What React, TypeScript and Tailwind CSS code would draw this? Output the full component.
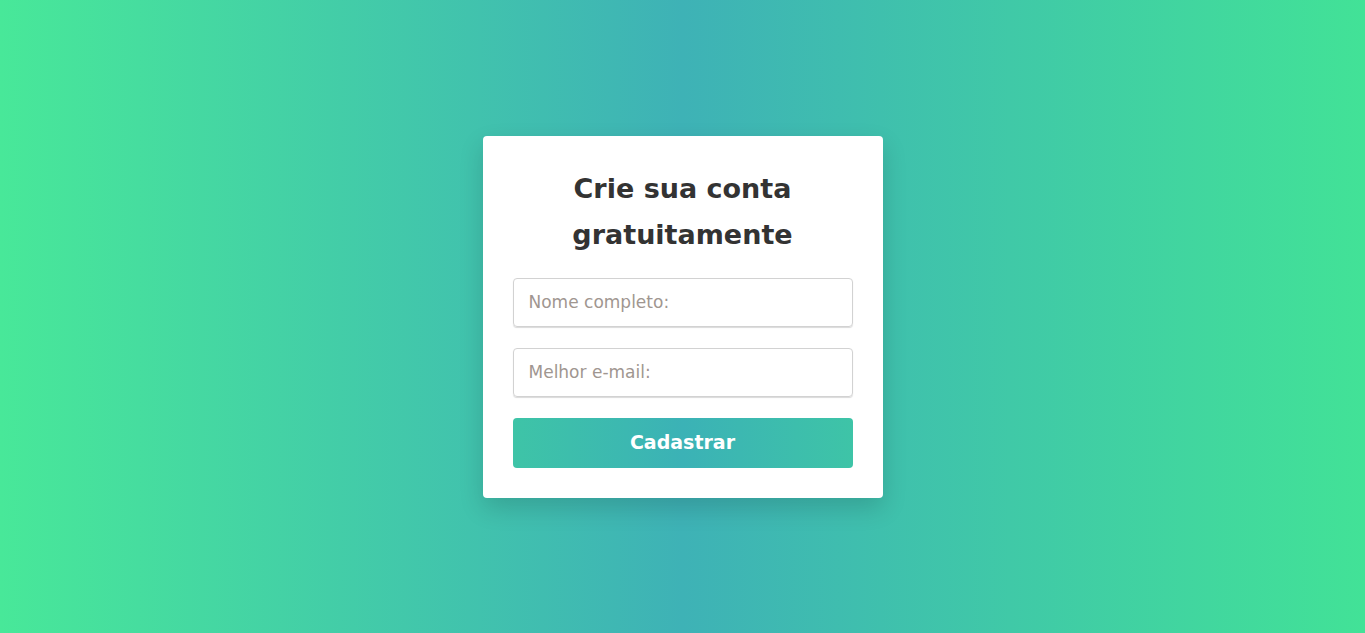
import React from "react";

export default function App() {
  return (
    <div
      className="w-full h-[633px] flex items-center justify-center bg-[linear-gradient(90deg,#48e899_0%,#3eb2b6_50%,#42e297_100%)]"
      style={{ fontFamily: "'DejaVu Sans', 'Noto Sans', sans-serif" }}
    >
      <form
        className="w-[400px] bg-white rounded-[4px] p-[30px] flex flex-col shadow-[0_10px_25px_rgba(0,0,0,0.15)]"
        onSubmit={(e) => e.preventDefault()}
      >
        <h1 className="text-center text-[27px] leading-[46px] font-semibold text-[#333333] px-[20px]">
          Crie sua conta gratuitamente
        </h1>
        <input
          type="text"
          placeholder="Nome completo:"
          className="mt-[20px] h-[49px] w-full rounded-[4px] border border-[#d2d2d2] shadow-[0_1px_1px_rgba(0,0,0,0.15)] px-[15px] text-[17px] text-[#333] placeholder:text-[#a09690] outline-none"
        />
        <input
          type="email"
          placeholder="Melhor e-mail:"
          className="mt-[21px] h-[49px] w-full rounded-[4px] border border-[#d2d2d2] shadow-[0_1px_1px_rgba(0,0,0,0.15)] px-[15px] text-[17px] text-[#333] placeholder:text-[#a09690] outline-none"
        />
        <button
          type="submit"
          className="mt-[21px] h-[50px] w-full rounded-[4px] text-white text-[19px] font-semibold bg-[linear-gradient(90deg,#3ec4a7_0%,#3bb2b6_50%,#3ec4a7_100%)]"
        >
          Cadastrar
        </button>
      </form>
    </div>
  );
}
